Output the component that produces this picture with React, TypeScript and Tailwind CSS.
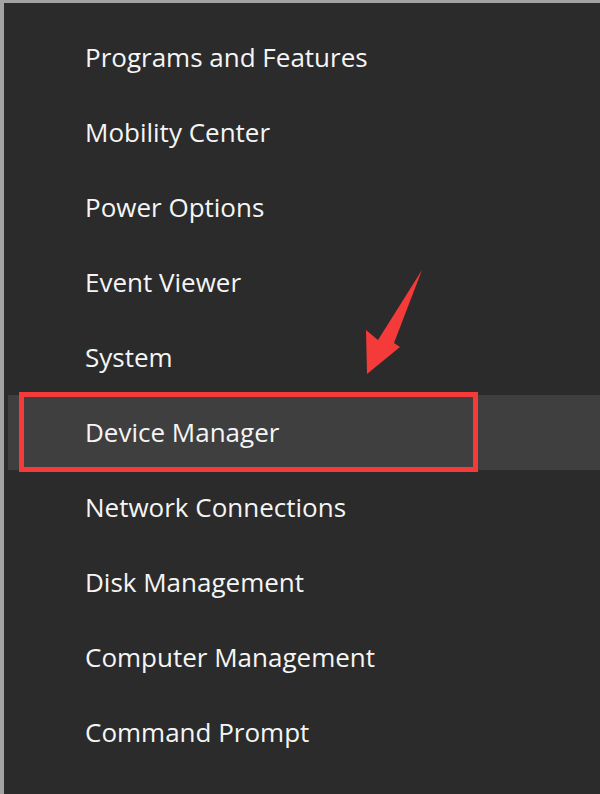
import React from "react";

const items = [
  "Programs and Features",
  "Mobility Center",
  "Power Options",
  "Event Viewer",
  "System",
  "Device Manager",
  "Network Connections",
  "Disk Management",
  "Computer Management",
  "Command Prompt",
];

export default function App() {
  return (
    <div
      className="relative w-[600px] h-[794px] overflow-hidden bg-[#2b2b2b] border-t-[3px] border-l-[4px] border-[#a3a3a3]"
      style={{ fontFamily: '"Open Sans", "Noto Sans", sans-serif' }}
    >
      <div className="flex flex-col pt-[17px] pl-[4px]">
        {items.map((label) => {
          const active = label === "Device Manager";
          return (
            <div
              key={label}
              className={`relative h-[75px] flex items-center pl-[77px] text-[26px] text-[#f5f5f5] ${
                active ? "bg-[#3f3f3f]" : ""
              }`}
            >
              <span>{label}</span>
              {active && (
                <div className="absolute left-[11px] top-[-3px] w-[459px] h-[80px] border-[5px] border-[#f53a3a]" />
              )}
            </div>
          );
        })}
      </div>
      <svg
        className="absolute left-0 top-0"
        width="600"
        height="794"
        viewBox="0 0 600 794"
        style={{ marginLeft: -4, marginTop: -3 }}
      >
        <polygon
          points="422,270 394,343 400,347 367,374 366,330 378,340"
          fill="#f53a3a"
        />
      </svg>
    </div>
  );
}
